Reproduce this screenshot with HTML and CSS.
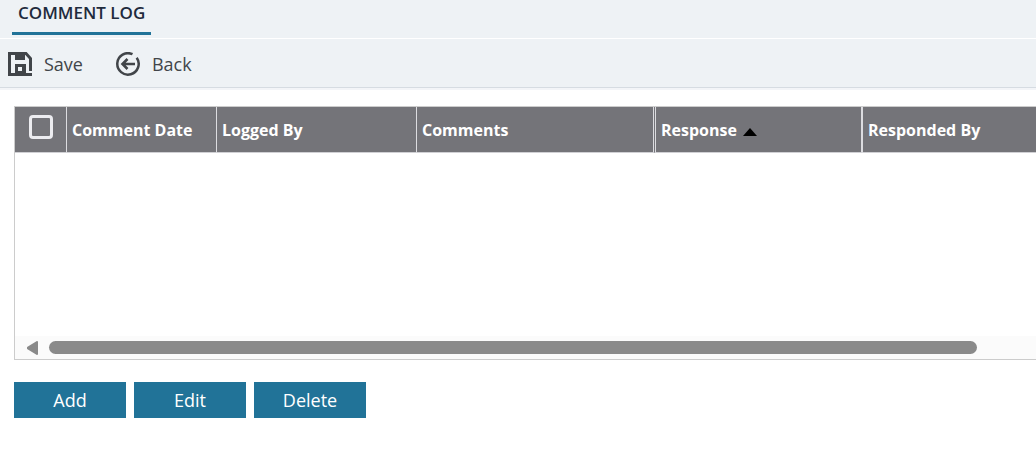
FILE: index.html
```html
<!DOCTYPE html>
<html lang="en">
<head>
<meta charset="utf-8">
<title>Comment Log</title>
<link rel="stylesheet" href="styles.css">
</head>
<body>
<header class="tabs"><h1 class="tab">COMMENT LOG</h1></header>
<div class="toolbar">
  <button class="tool" type="button">
    <svg class="icon" viewBox="0 0 24 24" aria-hidden="true">
      <path d="M1.500 23V1.500H18L22.500 6.500V19M0 22.500H24" fill="none" stroke="#414549" stroke-width="3"/>
      <path d="M7 1H17V8H7Z" fill="#414549"/>
      <path d="M7 12H18V23H7Z" fill="#414549"/>
      <path d="M10 15H14V19H10Z" fill="#eef2f5"/>
    </svg>
    <span>Save</span>
  </button>
  <button class="tool" type="button">
    <svg class="icon" viewBox="0 0 24 24" aria-hidden="true">
      <path d="M16.500 2.200A10.700 10.700 0 1 0 20.700 5.700" fill="none" stroke="#414549" stroke-width="2.500"/>
      <path d="M19 12H6.500M11.500 7L6.500 12L11.500 17" fill="none" stroke="#414549" stroke-width="2.600"/>
    </svg>
    <span>Back</span>
  </button>
</div>
<main class="content">
  <section class="grid">
    <table class="log">
      <thead>
        <tr>
          <th class="col-check"><input class="check" type="checkbox" aria-label="Select all"></th>
          <th class="col-date">Comment Date</th>
          <th class="col-logged">Logged By</th>
          <th class="col-comments">Comments</th>
          <th class="col-response" aria-sort="ascending">Response <svg class="sort" viewBox="0 0 14 8" aria-hidden="true"><path d="M0 8L7 0L14 8Z"/></svg></th>
          <th class="col-responded">Responded By</th>
        </tr>
      </thead>
      <tbody></tbody>
    </table>
    <div class="scroll">
      <svg class="arrow" viewBox="0 0 11 14" aria-hidden="true"><path d="M10 1V13L1 7.500V6.500Z" fill="#8a8a8a" stroke="#8a8a8a" stroke-width="2" stroke-linejoin="round"/></svg>
      <div class="track"><div class="thumb"></div></div>
    </div>
  </section>
  <div class="actions">
    <button class="action" type="button">Add</button>
    <button class="action" type="button">Edit</button>
    <button class="action" type="button">Delete</button>
  </div>
</main>
</body>
</html>
```
FILE: styles.css
```css
* { box-sizing: border-box; }
body {
  margin: 0;
  background: #fff;
  color: #414549;
  font-family: "Open Sans", "Noto Sans", sans-serif;
  overflow-x: hidden;
}
.tabs {
  display: flex;
  padding: 0 12px 3px;
  background: #eef2f5;
  border-bottom: 1px solid #fff;
}
.tab {
  margin: 0;
  padding: 2px 6px 8px;
  border-bottom: 3px solid #217398;
  color: #1f2b3d;
  font-size: 17px;
  font-weight: 600;
  line-height: 22px;
}
.toolbar {
  display: flex;
  gap: 33px;
  height: 51px;
  padding: 0 8px 2px;
  background: linear-gradient(#eef2f5 48px, #d6dce2 48px, #d6dce2 49px, #f3f5f8 49px);
}
.tool {
  display: flex;
  align-items: center;
  gap: 12px;
  padding: 0;
  border: 0;
  background: none;
  color: inherit;
  font: 18px/24px "Open Sans", "Noto Sans", sans-serif;
}
.icon { width: 24px; height: 24px; }
.content { padding: 16px 0 0 14px; }
.grid {
  display: flex;
  flex-direction: column;
  min-height: 254px;
  border: 1px solid #ccc;
  border-right: 0;
}
.log {
  width: 100%;
  table-layout: fixed;
  border-collapse: separate;
  border-spacing: 0;
}
.log th {
  height: 46px;
  padding: 0 5px;
  border-right: 1px solid #dcdce0;
  border-bottom: 1px solid #d0d0d4;
  background: #747479;
  color: #fff;
  font-size: 16px;
  font-weight: 700;
  line-height: 24px;
  text-align: left;
  white-space: nowrap;
}
.log .col-check { width: 52px; padding: 0 0 6px; text-align: center; }
.log .col-date { width: 150px; }
.log .col-logged { width: 200px; }
.log .col-comments { width: 239px; border-right: 3px double #dcdce0; }
.log .col-response { width: 207px; border-right-width: 2px; }
.log .col-responded { border-right: 0; }
.check {
  appearance: none;
  width: 24px;
  height: 24px;
  margin: 0;
  border: 3px solid #ececf0;
  border-radius: 4px;
  vertical-align: middle;
}
.sort { width: 14px; height: 8px; margin-left: 2px; }
.scroll {
  display: flex;
  align-items: center;
  gap: 11px;
  height: 23px;
  margin-top: auto;
  padding: 0 0 0 12px;
  background: #fbfbfb;
}
.arrow { width: 11px; height: 14px; }
.track { flex: 1; }
.thumb {
  width: 94%;
  height: 13px;
  border-radius: 7px;
  background: #8a8a8a;
}
.actions { display: flex; gap: 8px; padding-top: 22px; }
.action {
  width: 112px;
  height: 36px;
  padding: 0;
  border: 0;
  background: #217398;
  color: #fff;
  font: 18px/24px "Open Sans", "Noto Sans", sans-serif;
}
```
